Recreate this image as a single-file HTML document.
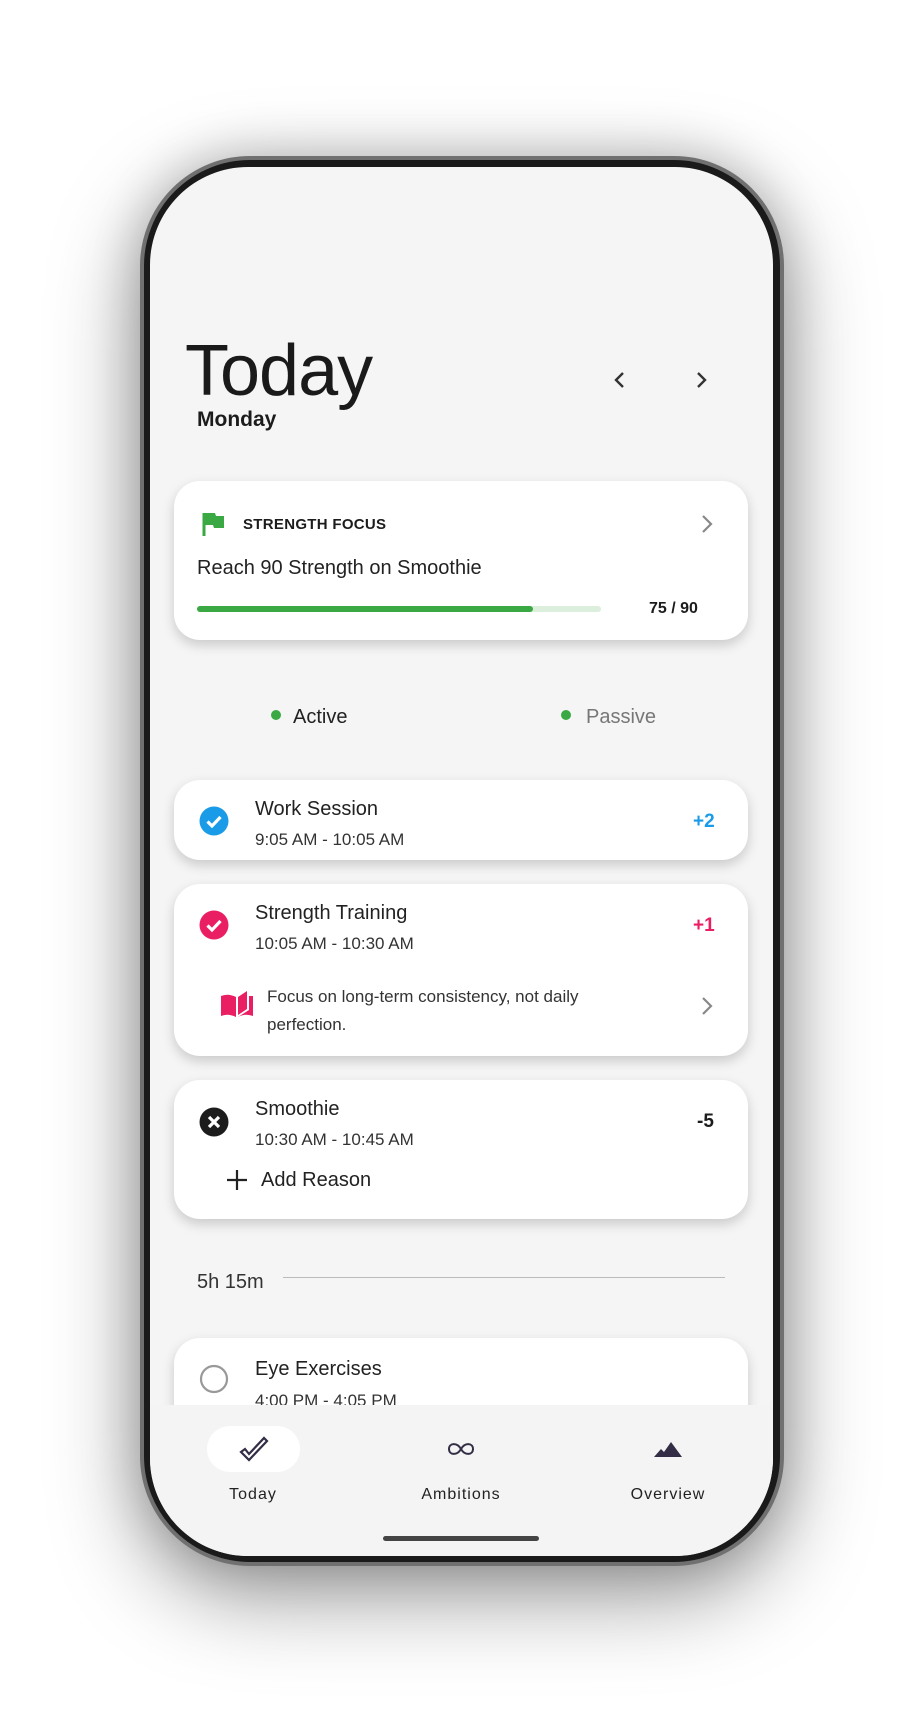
<!DOCTYPE html>
<html><head><meta charset="utf-8"><style>
*{margin:0;padding:0;box-sizing:border-box}
body{width:920px;height:1731px;background:#fff;position:relative;overflow:hidden;font-family:"Liberation Sans",sans-serif;color:#1c1c1c}
.phone{position:absolute;left:140px;top:156px;width:644px;height:1410px;border-radius:110px;background:#1a1a1a;border:4px solid #707070;box-shadow:0 30px 90px rgba(0,0,0,0.4),0 0 50px rgba(0,0,0,0.2)}
.screen{position:absolute;left:150px;top:167px;width:623px;height:1389px;border-radius:98px;background:#f5f5f5;overflow:hidden}
.a{position:absolute;white-space:nowrap}
.card{position:absolute;left:24px;width:574px;background:#fff;border-radius:26px;box-shadow:0 5px 12px rgba(0,0,0,0.18)}
.t{font-size:20px;color:#222}
.s{font-size:17px;color:#333}
.nav{position:absolute;left:0;top:1238px;width:623px;height:160px;background:#f4f4f4}
.lbl{font-size:16px;letter-spacing:1px;color:#222;transform:translateX(-50%)}
</style></head><body>
<div class="phone"></div>
<div class="screen">
  <div class="a" style="left:35px;top:163px;font-size:72px;font-weight:300;color:#1a1a1a;letter-spacing:-1px">Today</div>
  <div class="a" style="left:47px;top:241px;font-size:21px;font-weight:bold">Monday</div>
  <svg class="a" style="left:460px;top:203px" width="20" height="20" viewBox="0 0 20 20"><path d="M13 3 L6 10 L13 17" fill="none" stroke="#333" stroke-width="2.4"/></svg>
  <svg class="a" style="left:541px;top:203px" width="20" height="20" viewBox="0 0 20 20"><path d="M7 3 L14 10 L7 17" fill="none" stroke="#333" stroke-width="2.4"/></svg>

  <div class="card" style="top:314px;height:159px">
    <svg class="a" style="left:28px;top:30px" width="24" height="26" viewBox="0 0 24 26"><path d="M2 2 V25" stroke="#3aa843" stroke-width="3"/><path d="M3 2 H13 L14 5 H22 V17 H12 L11 14 H3Z" fill="#3aa843"/></svg>
    <div class="a" style="left:69px;top:35px;font-size:15px;font-weight:bold;letter-spacing:0.3px">STRENGTH FOCUS</div>
    <svg class="a" style="left:525px;top:33px" width="16" height="20" viewBox="0 0 16 20"><path d="M4 2 L12 10 L4 18" fill="none" stroke="#888" stroke-width="2.2"/></svg>
    <div class="a" style="left:23px;top:76px;font-size:20px;color:#222">Reach 90 Strength on Smoothie</div>
    <div class="a" style="left:23px;top:125px;width:404px;height:6px;border-radius:3px;background:#dcefdc"></div>
    <div class="a" style="left:23px;top:125px;width:336px;height:6px;border-radius:3px;background:#3aa843"></div>
    <div class="a" style="left:475px;top:119px;font-size:16px;font-weight:bold">75 / 90</div>
  </div>

  <div class="a" style="left:121px;top:543px;width:10px;height:10px;border-radius:50%;background:#3aa843"></div>
  <div class="a" style="left:143px;top:539px;font-size:20px;color:#222">Active</div>
  <div class="a" style="left:411px;top:543px;width:10px;height:10px;border-radius:50%;background:#3aa843"></div>
  <div class="a" style="left:436px;top:539px;font-size:20px;color:#777">Passive</div>

  <div class="card" style="top:613px;height:80px">
    <svg class="a" style="left:25px;top:26px" width="30" height="30" viewBox="0 0 30 30"><circle cx="15" cy="15" r="14.5" fill="#1a9be8"/><path d="M8.5 15.5 L13 20 L21.5 11" fill="none" stroke="#fff" stroke-width="3.2"/></svg>
    <div class="a t" style="left:81px;top:18px">Work Session</div>
    <div class="a s" style="left:81px;top:50px">9:05 AM - 10:05 AM</div>
    <div class="a" style="left:519px;top:31px;font-size:19px;font-weight:bold;color:#1a9be8">+2</div>
  </div>

  <div class="card" style="top:717px;height:172px">
    <svg class="a" style="left:25px;top:26px" width="30" height="30" viewBox="0 0 30 30"><circle cx="15" cy="15" r="14.5" fill="#e91e63"/><path d="M8.5 15.5 L13 20 L21.5 11" fill="none" stroke="#fff" stroke-width="3.2"/></svg>
    <div class="a t" style="left:81px;top:18px">Strength Training</div>
    <div class="a s" style="left:81px;top:50px">10:05 AM - 10:30 AM</div>
    <div class="a" style="left:519px;top:31px;font-size:19px;font-weight:bold;color:#e91e63">+1</div>
    <svg class="a" style="left:46px;top:106px" width="34" height="28" viewBox="0 0 34 28"><path d="M1 6 Q8 3 16 7 V27 Q8 23 1 26Z" fill="#e91e63"/><path d="M18 7 L27 1 V19 L18 25Z" fill="#e91e63"/><path d="M29 6 H33 V26 Q25 23 18 27 L29 20Z" fill="#e91e63"/></svg>
    <div class="a" style="left:93px;top:99px;font-size:17px;color:#333;line-height:28px;white-space:normal;width:380px">Focus on long-term consistency, not daily perfection.</div>
    <svg class="a" style="left:525px;top:112px" width="16" height="20" viewBox="0 0 16 20"><path d="M4 2 L12 10 L4 18" fill="none" stroke="#888" stroke-width="2.2"/></svg>
  </div>

  <div class="card" style="top:913px;height:139px">
    <svg class="a" style="left:25px;top:27px" width="30" height="30" viewBox="0 0 30 30"><circle cx="15" cy="15" r="14.5" fill="#1c1c1c"/><path d="M10 10 L20 20 M20 10 L10 20" stroke="#fff" stroke-width="3.2"/></svg>
    <div class="a t" style="left:81px;top:18px">Smoothie</div>
    <div class="a s" style="left:81px;top:50px">10:30 AM - 10:45 AM</div>
    <div class="a" style="left:523px;top:31px;font-size:19px;font-weight:bold">-5</div>
    <svg class="a" style="left:52px;top:89px" width="22" height="22" viewBox="0 0 22 22"><path d="M11 1 V21 M1 11 H21" stroke="#222" stroke-width="2.2"/></svg>
    <div class="a" style="left:87px;top:89px;font-size:20px;color:#222">Add Reason</div>
  </div>

  <div class="a" style="left:47px;top:1104px;font-size:20px;color:#333">5h 15m</div>
  <div class="a" style="left:133px;top:1110px;width:442px;height:1px;background:#bbb"></div>

  <div class="card" style="top:1171px;height:100px">
    <svg class="a" style="left:25px;top:26px" width="30" height="30" viewBox="0 0 30 30"><circle cx="15" cy="15" r="13" fill="none" stroke="#999" stroke-width="2.2"/></svg>
    <div class="a t" style="left:81px;top:20px">Eye Exercises</div>
    <div class="a s" style="left:81px;top:53px">4:00 PM - 4:05 PM</div>
  </div>

  <div class="nav">
    <div class="a" style="left:57px;top:21px;width:93px;height:46px;border-radius:23px;background:#fff"></div>
    <svg class="a" style="left:89px;top:30px" width="30" height="28" viewBox="0 0 30 28"><path d="M2 17 L10 25 L28 6 L25 3 L10 19 L6 14Z" fill="none" stroke="#332d45" stroke-width="2.2" stroke-linejoin="miter"/></svg>
    <div class="a lbl" style="left:103px;top:81px">Today</div>
    <svg class="a" style="left:294px;top:34px" width="34" height="20" viewBox="0 0 34 20"><path d="M17 10 C13 3 5 4 5 10 C5 16 13 17 17 10 C21 3 29 4 29 10 C29 16 21 17 17 10Z" fill="none" stroke="#332d45" stroke-width="2"/></svg>
    <div class="a lbl" style="left:311px;top:81px">Ambitions</div>
    <svg class="a" style="left:503px;top:35px" width="30" height="18" viewBox="0 0 30 18"><path d="M1 17 L8 9 L11 12 L18 2 L29 17Z" fill="#332d45"/></svg>
    <div class="a lbl" style="left:518px;top:81px">Overview</div>
    <div class="a" style="left:233px;top:131px;width:156px;height:5px;border-radius:3px;background:#444"></div>
  </div>
</div>
</body></html>
